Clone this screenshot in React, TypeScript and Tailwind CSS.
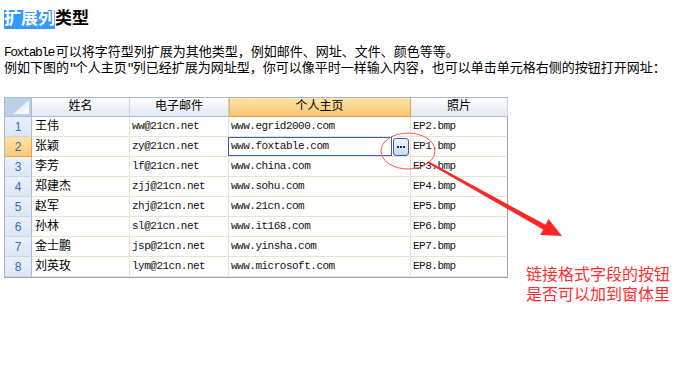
import React from "react";

const rows = [
  { name: "王伟", mail: "ww@21cn.net", home: "www.egrid2000.com", pic: "EP2.bmp" },
  { name: "张颖", mail: "zy@21cn.net", home: "www.foxtable.com", pic: "EP1.bmp" },
  { name: "李芳", mail: "lf@21cn.net", home: "www.china.com", pic: "EP3.bmp" },
  { name: "郑建杰", mail: "zjj@21cn.net", home: "www.sohu.com", pic: "EP4.bmp" },
  { name: "赵军", mail: "zhj@21cn.net", home: "www.21cn.com", pic: "EP5.bmp" },
  { name: "孙林", mail: "sl@21cn.net", home: "www.it168.com", pic: "EP6.bmp" },
  { name: "金士鹏", mail: "jsp@21cn.net", home: "www.yinsha.com", pic: "EP7.bmp" },
  { name: "刘英玫", mail: "lym@21cn.net", home: "www.microsoft.com", pic: "EP8.bmp" },
];

const cjk = "[font-family:'Liberation_Mono','Noto_Sans_CJK_SC',monospace]";
const mono = "[font-family:'Liberation_Mono',monospace] text-[11px] tracking-[-0.5px] text-[#111]";
const headCell =
  "h-[19px] flex items-center justify-center border-r border-b border-r-[#c3d1e4] border-b-[#a7bcd8] bg-gradient-to-b from-[#fcfdfe] to-[#e2e9f4] text-[12px] text-black";
const dataCell = "h-[20px] flex items-center border-r border-b border-[#e9e4d0] bg-white";

function RowHeader({ n }: { n: number }) {
  const active = n === 2;
  return (
    <div
      className={
        active
          ? "h-[20px] flex items-center justify-center border-r border-b border-[#f0a040] bg-gradient-to-b from-[#fde2a6] to-[#f9c978] text-[12px] text-[#3a6cb2] [font-family:'Liberation_Sans',sans-serif]"
          : "h-[20px] flex items-center justify-center border-r border-b border-r-[#a7bcd8] border-b-[#c8d6ea] bg-gradient-to-b from-[#eaf0f9] to-[#dce6f4] text-[12px] text-[#3a6cb2] [font-family:'Liberation_Sans',sans-serif]"
      }
    >
      {n}
    </div>
  );
}

export default function App() {
  return (
    <div className={`relative w-[688px] h-[375px] overflow-hidden bg-white pl-[4px] pt-[10px] text-black ${cjk}`}>
      {/* 标题 */}
      <div className="h-[19px] flex items-center text-[17px] leading-[19px] font-bold">
        <span className="bg-[#3399ff] text-white">扩展列</span>
        <span>类型</span>
      </div>

      <div className="mt-[16px] text-[13px] leading-[16px]">
        <div>
          <span className="tracking-[-1.6px]">Foxtable</span>
          <span className="pl-[2px]">可以将字符型列扩展为其他类型，例如邮件、网址、文件、颜色等等。</span>
        </div>
        <div>
          例如下图的<span className="tracking-[-2px]">"</span>个人主页<span className="tracking-[-2px]">"</span>列已经扩展为网址型，你可以像平时一样输入内容，也可以单击单元格右侧的按钮打开网址：
        </div>
      </div>

      <div className="mt-[20px] flex items-start">
        {/* 表格 */}
        <div className="grid grid-cols-[27px_98px_99px_182px_97px] border-l border-t border-[#a9b8cc] shadow-[0_1px_0_#9aa6b6]">
          <div className="h-[19px] relative border-r border-b border-[#a7bcd8] bg-[#bcd0ea]">
            <svg className="absolute right-[2px] bottom-[2px]" width="16" height="14" viewBox="0 0 16 14">
              <defs>
                <linearGradient id="tri" x1="0" y1="0" x2="1" y2="1">
                  <stop offset="0" stopColor="#d7e3f4" />
                  <stop offset="1" stopColor="#ffffff" />
                </linearGradient>
              </defs>
              <polygon points="16,0 16,14 0,14" fill="url(#tri)" />
            </svg>
          </div>
          <div className={headCell}>姓名</div>
          <div className={headCell}>电子邮件</div>
          <div className="h-[19px] flex items-center justify-center border-r border-b border-[#f0a03a] shadow-[inset_1px_0_0_#f3b55a] bg-gradient-to-b from-[#fde3a9] to-[#f8c670] text-[12px] text-black">
            个人主页
          </div>
          <div className={headCell}>照片</div>

          {rows.map((r, i) => (
            <React.Fragment key={r.pic}>
              <RowHeader n={i + 1} />
              <div className={`${dataCell} pl-[3px] text-[12px]`}>{r.name}</div>
              <div className={`${dataCell} pl-[2px] ${mono}`}>{r.mail}</div>
              {i === 1 ? (
                <div className={`${dataCell} items-start`}>
                  <div className="ml-[-1px] w-[164px] h-[19px] flex items-center border border-[#2f62b4] bg-white pl-[2px]">
                    <span className={mono}>{r.home}</span>
                  </div>
                  <div className="ml-[1px] mt-[1px] w-[16px] h-[18px] flex items-center justify-center gap-[1px] rounded-[3px] border border-[#2f5fb0] bg-gradient-to-b from-[#f4f7fc] to-[#c8d7ee]">
                    <span className="w-[2px] h-[2px] bg-[#1b2a44]" />
                    <span className="w-[2px] h-[2px] bg-[#1b2a44]" />
                    <span className="w-[2px] h-[2px] bg-[#1b2a44]" />
                  </div>
                </div>
              ) : (
                <div className={`${dataCell} pl-[2px] ${mono}`}>{r.home}</div>
              )}
              <div className={`${dataCell} border-r-[#9aa6b6] pl-[2px] ${mono}`}>{r.pic}</div>
            </React.Fragment>
          ))}
        </div>

        {/* 红色批注 */}
        <div className="ml-[18px] mt-[169px] text-[16px] leading-[20px] text-[#ff2d2d]">
          <div>链接格式字段的按钮</div>
          <div>是否可以加到窗体里</div>
        </div>
      </div>

      {/* 圈和箭头 */}
      <svg className="absolute left-0 top-0 pointer-events-none" width="688" height="375">
        <ellipse cx="408" cy="151" rx="27" ry="18" fill="none" stroke="#ff5050" strokeWidth="1" />
        <polygon
          points="427.5,163 428.5,161.2 545.6,224.8 548.5,218.9 562,236 540.2,234.9 543.2,229.6"
          fill="#ff2626"
        />
      </svg>
    </div>
  );
}
